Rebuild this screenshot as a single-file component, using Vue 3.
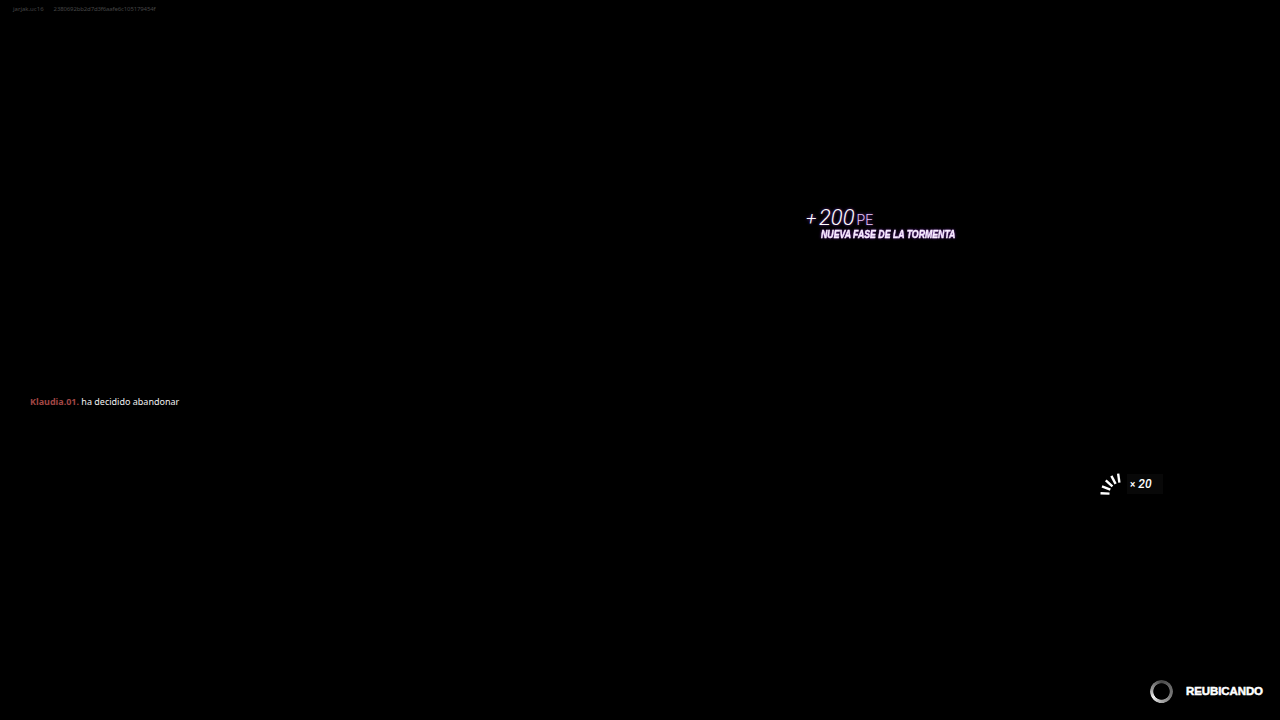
<script setup>
const ticks = [0, 1, 2, 3, 4]
const matchInfo = { user: 'jarjak.uc16', id: '2380692bb2d7d3f6aafe6c105179454f' }
</script>

<template>
  <div class="hud">
    <div class="match-info">
      <span>{{ matchInfo.user }}</span>
      <span class="match-id">{{ matchInfo.id }}</span>
    </div>

    <div class="xp-toast">
      <div class="xp-amount"><span class="plus">+</span><span class="points">200</span><span class="unit">PE</span></div>
      <div class="xp-reason">NUEVA FASE DE LA TORMENTA</div>
    </div>

    <div class="feed">
      <span class="player">Klaudia.01.</span> ha decidido abandonar
    </div>

    <div class="ammo">
      <svg class="ammo-icon" width="24" height="24" viewBox="0 0 24 24">
        <g v-for="t in ticks" :key="t" :transform="`rotate(${t * 20 + 2} 22 22)`">
          <rect x="1.5" y="20.8" width="9" height="2.4" fill="#fff" />
        </g>
      </svg>
      <div class="ammo-count"><span class="times">×</span> 20</div>
    </div>

    <div class="relocating">
      <span class="spinner"></span>
      <span class="relocating-text">REUBICANDO</span>
    </div>
  </div>
</template>

<style>
html,
body {
  background: #000;
}
</style>

<style scoped>
.hud {
  position: relative;
  width: 1280px;
  height: 720px;
  background: #000;
  overflow: hidden;
  font-family: "Noto Sans", "Liberation Sans", sans-serif;
}

.match-info {
  position: absolute;
  left: 13px;
  top: 5px;
  display: flex;
  gap: 10px;
  font-size: 6px;
  line-height: 9px;
  color: #454545;
  white-space: nowrap;
}

.match-id {
  letter-spacing: -0.13px;
}

.xp-toast {
  position: absolute;
  left: 806px;
  top: 209px;
  color: #fff;
}

.xp-amount {
  display: flex;
  align-items: baseline;
  height: 18px;
  line-height: 18px;
  font-family: Roboto, "Noto Sans", sans-serif;
  font-weight: 300;
  font-style: italic;
  text-shadow: 0 0 3px rgba(170, 70, 255, 0.7);
}

.plus {
  font-size: 19px;
  width: 13px;
}

.points {
  font-size: 22px;
}

.unit {
  margin-left: 2px;
  font-size: 14px;
  font-style: normal;
  color: #e9c8ff;
}

.xp-reason {
  margin: 1px 0 0 15px;
  font-family: "Liberation Sans", Arial, sans-serif;
  font-size: 11px;
  line-height: 13px;
  font-weight: 700;
  font-style: italic;
  color: #f8ecff;
  white-space: nowrap;
  transform: scaleX(0.795);
  transform-origin: left center;
  -webkit-text-stroke: 0.4px #f8ecff;
  text-shadow: 0 0 3px rgba(170, 60, 255, 0.9);
}

.feed {
  position: absolute;
  left: 30px;
  top: 394px;
  font-size: 9px;
  line-height: 15px;
  color: #f0f0f0;
  white-space: nowrap;
}

.player {
  font-weight: 700;
  color: #a04644;
}

.ammo {
  position: absolute;
  left: 1099px;
  top: 472px;
  display: flex;
  align-items: center;
  gap: 4px;
}

.ammo-count {
  width: 36px;
  height: 20px;
  padding-left: 3px;
  box-sizing: border-box;
  background: #080808;
  font-family: Roboto, "Noto Sans", sans-serif;
  font-size: 12px;
  line-height: 21px;
  font-weight: 500;
  font-style: italic;
  color: #fff;
}

.times {
  font-size: 10px;
  font-style: normal;
}

.relocating {
  position: absolute;
  left: 1150px;
  top: 680px;
  display: flex;
  align-items: center;
  gap: 13px;
}

.spinner {
  width: 23px;
  height: 23px;
  box-sizing: border-box;
  border-radius: 50%;
  background: conic-gradient(#4a4a4a 0deg, #666 60deg, #7a7a7a 120deg, #a8a8a8 180deg, #f0f0f0 235deg, #999 285deg, #4a4a4a 360deg);
  -webkit-mask: radial-gradient(circle, transparent 7.8px, #000 8.6px);
  mask: radial-gradient(circle, transparent 7.8px, #000 8.6px);
}

.relocating-text {
  padding-bottom: 2px;
  font-family: "Liberation Sans", Arial, sans-serif;
  font-size: 11.5px;
  font-weight: 700;
  color: #fff;
  -webkit-text-stroke: 0.5px #fff;
  letter-spacing: -0.1px;
}
</style>
